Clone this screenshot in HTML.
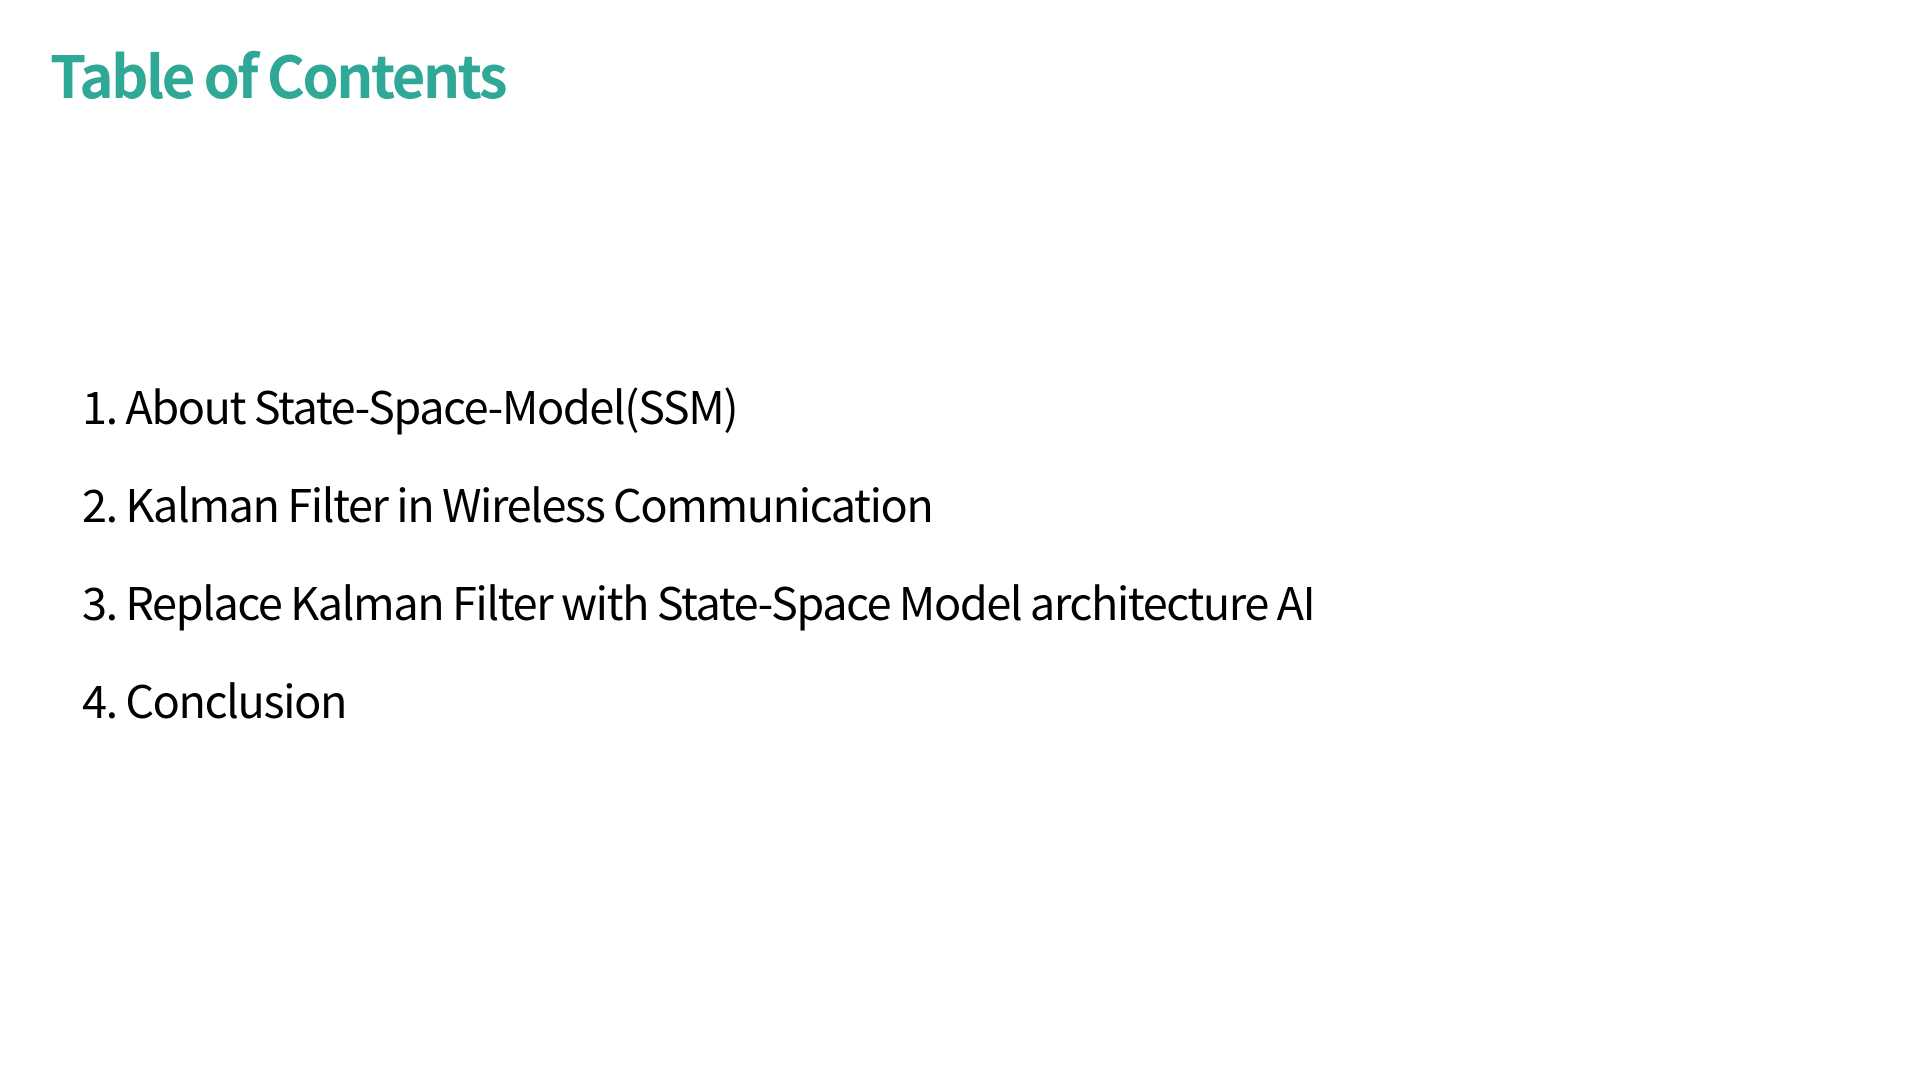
<!DOCTYPE html>
<html><head><meta charset="utf-8"><style>
html,body{margin:0;padding:0;width:1920px;height:1080px;background:#fff;overflow:hidden}
body{font-family:"Noto Sans CJK JP","Liberation Sans",sans-serif;position:relative}
.t{position:absolute;left:50px;top:44px;font-size:58px;line-height:1;font-weight:bold;color:#30a898;margin:0;letter-spacing:-2.5px}
.l{position:absolute;left:82px;font-size:45px;line-height:1;color:#000;white-space:nowrap;letter-spacing:-1.4px}
</style></head><body>
<div class="t">Table of Contents</div>
<div class="l" style="top:382px">1. About State-Space-Model(SSM)</div>
<div class="l" style="top:480px">2. Kalman Filter in Wireless Communication</div>
<div class="l" style="top:578px">3. Replace Kalman Filter with State-Space Model architecture AI</div>
<div class="l" style="top:676px">4. Conclusion</div>
</body></html>
